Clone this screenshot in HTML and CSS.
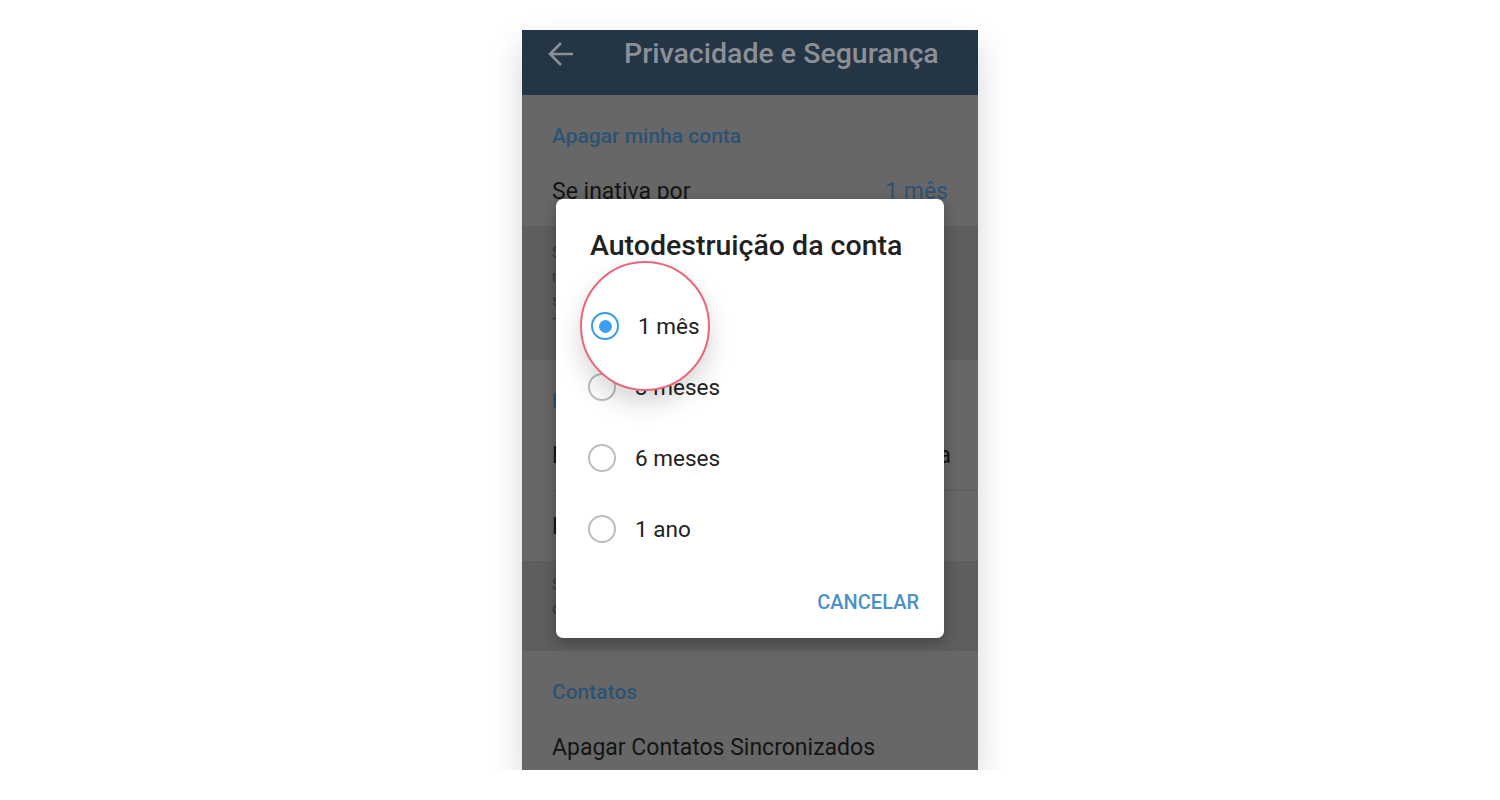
FILE: index.html
```html
<!DOCTYPE html>
<html lang="pt-BR">
<head>
    <meta charset="UTF-8">
    <meta name="viewport" content="width=device-width, initial-scale=1.0">
    <title>Privacidade e Segurança</title>
    <link rel="stylesheet" href="styles.css">
</head>
<body>
    <div class="phone">
        <!-- Top Bar -->
        <div class="topbar">
            <svg class="back-icon" width="26" height="26" viewBox="0 0 26 26">
                <path d="M2 13H25M13 2L2 13L13 24" fill="none" stroke="#8b9096" stroke-width="2.6"/>
            </svg>
            <div class="topbar-title">Privacidade e Segurança</div>
        </div>

        <!-- Settings (dimmed behind the dialog) -->
        <div class="section">
            <div class="section-title">Apagar minha conta</div>
            <div class="row">
                <span>Se inativa por</span>
                <span class="row-value">1 mês</span>
            </div>
        </div>
        <div class="hint hint-tall">
            Se você não ficar online pelo menos uma vez
            neste período, sua conta será apagada junto com
            suas mensagens, grupos e contatos salvos no
            Telegram.
        </div>

        <div class="section">
            <div class="section-title">Bots e Sites</div>
            <div class="row row-divider">
                <span>Limpar Dados de Pagamento e Entrega</span>
            </div>
            <div class="row">
                <span>Logins em Sites</span>
            </div>
        </div>
        <div class="hint hint-short">
            Sites onde você usou o Telegram para fazer
            login com a sua conta.
        </div>

        <div class="section">
            <div class="section-title">Contatos</div>
            <div class="row">
                <span>Apagar Contatos Sincronizados</span>
            </div>
        </div>

        <!-- Dialog -->
        <div class="dialog">
            <div class="dialog-title">Autodestruição da conta</div>
            <div class="options">
                <div class="option option-covered">
                    <span class="radio radio-on"></span>
                    <span>1 mês</span>
                </div>
                <div class="option">
                    <span class="radio"></span>
                    <span>3 meses</span>
                </div>
                <div class="option">
                    <span class="radio"></span>
                    <span>6 meses</span>
                </div>
                <div class="option">
                    <span class="radio"></span>
                    <span>1 ano</span>
                </div>
            </div>
            <div class="dialog-actions">
                <button class="text-btn">CANCELAR</button>
            </div>

            <!-- Highlight circle over the selected option -->
            <div class="spotlight">
                <span class="radio radio-on"></span>
                <span>1 mês</span>
            </div>
        </div>
    </div>
</body>
</html>
```

FILE: styles.css
```css
/* General Reset */
* {
    margin: 0;
    padding: 0;
    box-sizing: border-box;
}

body {
    background-color: #ffffff;
    font-family: Roboto, "Liberation Sans", sans-serif;
}

/* Phone Frame */
.phone {
    position: relative;
    width: 456px;
    height: 740px;
    margin: 30px auto 0;
    background-color: #676767;
    overflow: hidden;
    box-shadow: 0 14px 30px rgba(0, 0, 0, 0.16);
}

/* Top Bar */
.topbar {
    height: 65px;
    background-color: #243546;
    display: flex;
    align-items: center;
    padding: 0 0 17px 26px;
}

.back-icon {
    flex-shrink: 0;
}

.topbar-title {
    margin-left: 50px;
    font-size: 28.5px;
    line-height: 34px;
    font-weight: 500;
    color: #8c9095;
    white-space: nowrap;
}

/* Sections */
.section {
    background-color: #676767;
}

.section-title {
    padding: 28px 30px 7px;
    height: 61px;
    font-size: 21px;
    line-height: 26px;
    font-weight: 500;
    color: #2b5374;
}

.row {
    height: 70px;
    margin-left: 30px;
    padding-right: 30px;
    display: flex;
    align-items: center;
    justify-content: space-between;
    font-size: 23px;
    color: #141414;
    white-space: nowrap;
}

.row-divider {
    border-bottom: 1px solid #5b5b5b;
}

.row-value {
    color: #2b5374;
}

.hint {
    background-color: #5e5e5e;
    padding: 14px 50px 0 30px;
    font-size: 17px;
    line-height: 24px;
    color: #3c3c3c;
}

.hint-tall {
    height: 134px;
}

.hint-short {
    height: 90px;
    padding-top: 11px;
}

/* Dialog */
.dialog {
    position: absolute;
    left: 34px;
    top: 169px;
    width: 388px;
    height: 439px;
    background-color: #ffffff;
    border-radius: 7px;
    box-shadow: 0 4px 14px rgba(0, 0, 0, 0.3);
    padding-top: 30px;
}

.dialog-title {
    padding: 0 32px 0 34px;
    font-size: 28.5px;
    line-height: 34px;
    font-weight: 500;
    color: #212121;
    white-space: nowrap;
}

.options {
    margin-top: 17px;
}

.option {
    height: 71px;
    padding-left: 32px;
    display: flex;
    align-items: center;
    gap: 19px;
    font-size: 22.5px;
    color: #222222;
}

.option-covered {
    visibility: hidden;
}

/* Radio Buttons */
.radio {
    width: 28px;
    height: 28px;
    flex-shrink: 0;
    border: 2.5px solid #bdbdbd;
    border-radius: 50%;
    display: flex;
    align-items: center;
    justify-content: center;
}

.radio-on {
    border-color: #3c9be8;
}

.radio-on::after {
    content: "";
    width: 13px;
    height: 13px;
    border-radius: 50%;
    background-color: #3a9ff0;
}

.dialog-actions {
    margin-top: 18px;
    padding-right: 25px;
    display: flex;
    justify-content: flex-end;
}

.text-btn {
    height: 40px;
    border: none;
    background: none;
    font-family: inherit;
    font-size: 20px;
    font-weight: 500;
    color: #4a90c8;
    cursor: pointer;
}

/* Highlight Circle */
.spotlight {
    position: absolute;
    left: 24px;
    top: 62px;
    width: 130px;
    height: 130px;
    border: 2px solid #e9677a;
    border-radius: 50%;
    background-color: #ffffff;
    box-shadow: 0 12px 24px rgba(0, 0, 0, 0.16);
    display: flex;
    align-items: center;
    gap: 19px;
    padding-left: 9px;
    font-size: 22.5px;
    color: #222222;
    white-space: nowrap;
}
```
